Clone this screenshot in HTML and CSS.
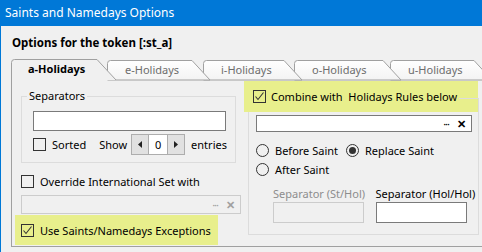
FILE: index.html
```html
<!DOCTYPE html>
<html>
<head>
  <meta charset="utf-8" />
  <link rel="stylesheet" href="styles.css">
</head>
<body>
  <div class="window">
    <div class="titlebar">Saints and Namedays Options</div>
    <div class="heading">Options for the token [:st_a]</div>

    <div class="tabs">
      <div class="tab active t1">
        <svg width="116" height="21"><path d="M0.5 21 V3.5 Q0.5 0.5 3.5 0.5 H86 L105 21" fill="#f0f0f0" stroke="#a0a0a0"/></svg>
        <span>a-Holidays</span>
      </div>
      <div class="tab t2">
        <svg width="116" height="21"><path d="M0.5 20 V3.5 Q0.5 0.5 3.5 0.5 H85 L103 20 Z" fill="url(#tabfill)" stroke="#a0a0a0"/></svg>
        <span>e-Holidays</span>
      </div>
      <div class="tab t3">
        <svg width="116" height="21"><path d="M0.5 20 V3.5 Q0.5 0.5 3.5 0.5 H81 L99 20 Z" fill="url(#tabfill)" stroke="#a0a0a0"/></svg>
        <span>i-Holidays</span>
      </div>
      <div class="tab t4">
        <svg width="116" height="21"><path d="M0.5 20 V3.5 Q0.5 0.5 3.5 0.5 H89 L107 20 Z" fill="url(#tabfill)" stroke="#a0a0a0"/></svg>
        <span>o-Holidays</span>
      </div>
      <div class="tab t5">
        <svg width="116" height="21"><path d="M0.5 20 V3.5 Q0.5 0.5 3.5 0.5 H84 L102 20 Z" fill="url(#tabfill)" stroke="#a0a0a0"/></svg>
        <span>u-Holidays</span>
      </div>
      <svg width="0" height="0" class="defs">
        <defs>
          <linearGradient id="tabfill" x1="0" y1="0" x2="0" y2="1">
            <stop offset="0" stop-color="#ffffff"/>
            <stop offset="1" stop-color="#f3f3f3"/>
          </linearGradient>
        </defs>
      </svg>
    </div>

    <div class="panel">
      <div class="col-left">
        <fieldset class="sep-box">
          <legend>Separators</legend>
          <div class="edit wide"></div>
          <div class="sort-row">
            <span class="check"></span>
            <span class="lbl">Sorted</span>
            <span class="show">Show</span>
            <span class="spin">
              <span class="spin-btn"><svg width="4" height="7"><path d="M4 0 L0 3.5 L4 7 Z" fill="#222"/></svg></span>
              <span class="spin-val">0</span>
              <span class="spin-btn"><svg width="4" height="7"><path d="M0 0 L4 3.5 L0 7 Z" fill="#222"/></svg></span>
            </span>
            <span class="entries">entries</span>
          </div>
        </fieldset>

        <div class="check-row override">
          <span class="check"></span>
          <span class="lbl">Override International Set with</span>
        </div>
        <div class="edit picker disabled">
          <span class="dots">···</span><span class="clear">✕</span>
        </div>
        <div class="check-row hilite exceptions">
          <span class="check on"><svg width="11" height="11"><path d="M1.5 5.5 L4 8.5 L9.5 1.5" fill="none" stroke="#333" stroke-width="1.1"/></svg></span>
          <span class="lbl">Use Saints/Namedays Exceptions</span>
        </div>
      </div>

      <div class="col-right">
        <div class="combine hilite">
          <span class="check on"><svg width="11" height="11"><path d="M1.5 5.5 L4 8.5 L9.5 1.5" fill="none" stroke="#333" stroke-width="1.1"/></svg></span>
          <span class="lbl">Combine with&nbsp; Holidays Rules below</span>
          <span class="rule"></span>
        </div>
        <div class="edit picker rules">
          <span class="dots">···</span><span class="clear">✕</span>
        </div>
        <div class="radio-row">
          <span class="radio"></span><span class="lbl">Before Saint</span>
          <span class="radio on replace"></span><span class="lbl">Replace Saint</span>
        </div>
        <div class="radio-row second">
          <span class="radio"></span><span class="lbl">After Saint</span>
        </div>
        <div class="sep-cols">
          <div class="sep-col">
            <div class="sep-lbl muted">Separator (St/Hol)</div>
            <div class="edit small disabled"></div>
          </div>
          <div class="sep-col">
            <div class="sep-lbl">Separator (Hol/Hol)</div>
            <div class="edit small"></div>
          </div>
        </div>
      </div>
    </div>
  </div>
</body>
</html>
```
FILE: styles.css
```css
body {
  margin: 0;
  font-family: "Noto Sans", sans-serif;
  font-size: 11px;
  color: #000;
  background: #f0f0f0;
}
.window {
  width: 481px;
  height: 252px;
  border-left: 1px solid #0078d7;
  background: #f0f0f0;
  overflow: hidden;
}
.titlebar {
  height: 26px;
  line-height: 25px;
  background: #0078d7;
  color: #fff;
  padding-left: 4px;
  font-size: 12px;
}
.heading {
  font-weight: bold;
  font-size: 11.5px;
  margin: 9px 0 0 11px;
  line-height: 16px;
}

/* tabs */
.tabs {
  display: flex;
  margin: 8px 0 0 10px;
  height: 20px;
  position: relative;
  z-index: 2;
}
.tab {
  position: relative;
  flex-shrink: 0;
  width: 96px;
  height: 20px;
  color: #6d6d6d;
}
.tab svg {
  position: absolute;
  left: 0;
  top: 1px;
}
.tab span {
  position: relative;
  display: block;
  padding: 3px 0 0 18px;
  line-height: 15px;
}
.tab.active {
  color: #000;
  font-weight: bold;
}
.tab.active svg { top: 0; }
.tab.active span { padding: 2px 0 0 17px; }
.t1 { z-index: 6; }
.t2 { z-index: 5; }
.t3 { z-index: 4; width: 91px; }
.t4 { z-index: 3; }
.t5 { z-index: 2; }
.defs { position: absolute; }

/* panel */
.panel {
  display: flex;
  height: 166px;
  margin-left: 10px;
  border: 1px solid #a0a0a0;
  border-right: none;
  padding-left: 3px;
}
.col-left {
  width: 226px;
  flex-shrink: 0;
}
.col-right {
  width: 229px;
  flex-shrink: 0;
  margin: 18px 0 0 7px;
  height: 135px;
  border: 1px solid #dcdcdc;
}

.sep-box {
  margin: 10px 0 0 6px;
  padding: 0 0 7px 11px;
  width: 202px;
  border: 1px solid #dcdcdc;
}
.sep-box legend {
  padding: 0 2px;
  margin-left: -6px;
  line-height: 12px;
}

.edit {
  box-sizing: border-box;
  background: #fff;
  border: 1px solid #7a7a7a;
}
.edit.wide {
  width: 193px;
  height: 20px;
  margin-top: 9px;
}
.edit.disabled {
  background: #f0f0f0;
  border-color: #cccccc;
}
.picker {
  display: flex;
  justify-content: flex-end;
  align-items: center;
  padding-right: 5px;
}
.dots {
  font-size: 11px;
  letter-spacing: -1px;
  margin-right: 8px;
  line-height: 10px;
}
.clear {
  font-weight: bold;
  font-size: 11px;
  line-height: 11px;
}
.disabled .dots,
.disabled .clear { color: #a0a0a0; }

.sort-row {
  display: flex;
  align-items: center;
  margin-top: 3px;
  height: 21px;
}
.check {
  box-sizing: border-box;
  width: 13px;
  height: 13px;
  border: 1px solid #333;
  flex-shrink: 0;
  display: flex;
  align-items: center;
  justify-content: center;
}
.lbl {
  margin-left: 6px;
  white-space: nowrap;
}
.show { margin-left: 13px; }
.spin {
  display: flex;
  margin-left: 4px;
  height: 21px;
  box-sizing: border-box;
  border: 1px solid #adadad;
}
.spin-btn {
  width: 16px;
  background: #e1e1e1;
  display: flex;
  align-items: center;
  justify-content: center;
}
.spin-val {
  width: 18px;
  background: #fff;
  border-left: 1px solid #adadad;
  border-right: 1px solid #adadad;
  text-align: center;
  line-height: 19px;
}
.entries { margin-left: 6px; }

.check-row {
  display: flex;
  align-items: center;
  padding-left: 6px;
}
.override {
  margin-top: 11px;
  height: 15px;
}
.edit.picker.disabled {
  width: 220px;
  height: 19px;
  margin: 6px 0 0 6px;
}
.hilite { background: #e8ef8c; }
.exceptions {
  width: 197px;
  height: 30px;
  margin-top: 1px;
}

.combine {
  display: flex;
  align-items: center;
  height: 31px;
  margin: -18px 0 0 -5px;
  padding: 0 0 0 9px;
  box-sizing: border-box;
}
.combine .lbl { margin-left: 5px; }
.rule {
  flex: 1;
  align-self: stretch;
  margin-left: 2px;
  background: linear-gradient(#dcdcdc, #dcdcdc) no-repeat 0 17px / 100% 1px;
}
.edit.rules {
  width: 216px;
  height: 17px;
  margin: 3px 0 0 7px;
}
.radio-row {
  display: flex;
  align-items: center;
  height: 16px;
  margin: 10px 0 0 7px;
}
.radio-row.second { margin-top: 3px; }
.radio {
  box-sizing: border-box;
  width: 13px;
  height: 13px;
  border: 1px solid #333;
  border-radius: 50%;
  flex-shrink: 0;
  display: flex;
  align-items: center;
  justify-content: center;
}
.radio.on::after {
  content: "";
  width: 7px;
  height: 7px;
  border-radius: 50%;
  background: #333;
}
.radio-row .lbl { margin-left: 6px; }
.radio.replace { margin-left: 8px; }

.sep-cols {
  display: flex;
  margin: 9px 0 0 24px;
}
.sep-col { width: 106px; }
.sep-lbl {
  line-height: 16px;
  white-space: nowrap;
}
.muted { color: #8d8d8d; }
.edit.small {
  width: 91px;
  height: 21px;
  margin-top: 0;
}
```
